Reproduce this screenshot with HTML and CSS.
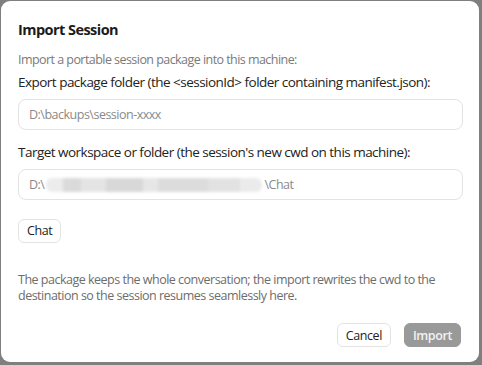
FILE: index.html
```html
<!DOCTYPE html>
<html>
<head>
<meta charset="utf-8">
<link rel="stylesheet" href="styles.css">
</head>
<body>
<div class="dialog">
  <h1 class="title">Import Session</h1>
  <p class="subtitle">Import a portable session package into this machine:</p>
  <label class="label">Export package folder (the &lt;sessionId&gt; folder containing manifest.json):</label>
  <div class="input"><span class="placeholder">D:\backups\session-xxxx</span></div>
  <label class="label">Target workspace or folder (the session's new cwd on this machine):</label>
  <div class="input"><span class="value">D:\</span><span class="redact"></span><span class="value">\Chat</span></div>
  <div class="chips"><button class="chip">Chat</button></div>
  <p class="note">The package keeps the whole conversation; the import rewrites the cwd to the destination so the session resumes seamlessly here.</p>
  <div class="actions">
    <button class="btn">Cancel</button>
    <button class="btn primary">Import</button>
  </div>
</div>
</body>
</html>
```
FILE: styles.css
```css
html, body {
  margin: 0;
  padding: 0;
  height: 100%;
  background: #7f7f7f;
}
body {
  padding: 1px 3px 3px 1px;
  box-sizing: border-box;
  font-family: "Open Sans", "Noto Sans", sans-serif;
}
.dialog {
  background: #fff;
  border-radius: 9px;
  height: 100%;
  box-sizing: border-box;
  padding: 19px 16px 0 17px;
  display: flex;
  flex-direction: column;
}
.title {
  margin: 0;
  font-size: 14.5px;
  font-weight: 700;
  color: #1b1b1b;
  line-height: 20px;
  letter-spacing: -0.55px;
}
.subtitle {
  margin: 12px 0 0 0;
  font-size: 12.5px;
  line-height: 16px;
  color: #7a7a7a;
  letter-spacing: -0.55px;
}
.label {
  display: block;
  margin-top: 5px;
  font-size: 13.5px;
  line-height: 18px;
  color: #222;
  letter-spacing: -0.52px;
}
.input {
  margin-top: 9px;
  height: 31px;
  border: 1px solid #e3e3e3;
  border-radius: 8px;
  box-sizing: border-box;
  display: flex;
  align-items: center;
  padding: 0 10px;
  font-size: 12.5px;
  letter-spacing: -0.5px;
}
.input + .label { margin-top: 13px; }
.label + .input { margin-top: 8px; }
.placeholder { color: #8a8a8a; }
.value { color: #8a8a8a; }
.redact {
  width: 216px;
  height: 14px;
  margin-left: 2px;
  margin-right: 2px;
  border-radius: 6px;
  background: linear-gradient(90deg, #ececec 0 8%, #dadada 8% 16%, #e4e4e4 16% 28%, #d8d8d8 28% 45%, #e6e6e6 45% 52%, #dcdcdc 52% 75%, #e2e2e2 75% 90%, #ebebeb 90%);
  filter: blur(1.5px);
}
.chips {
  margin-top: 19px;
  display: flex;
}
.chip {
  font-family: inherit;
  font-size: 12.5px;
  letter-spacing: -0.4px;
  color: #222;
  background: #fff;
  border: 1px solid #e3e3e3;
  border-radius: 6px;
  height: 24px;
  padding: 0 8px;
  line-height: 22px;
}
.note {
  margin: 29px 0 0 0;
  font-size: 12.5px;
  line-height: 16px;
  color: #6d6d6d;
  letter-spacing: -0.5px;
  padding-right: 10px;
}
.actions {
  margin-top: 19px;
  display: flex;
  justify-content: flex-end;
  gap: 13px;
  padding-right: 2px;
}
.btn {
  font-family: inherit;
  font-size: 12.5px;
  letter-spacing: -0.4px;
  height: 24px;
  padding: 0 8px;
  border-radius: 6px;
  border: 1px solid #e3e3e3;
  background: #fff;
  color: #222;
  min-width: 54px;
}
.btn.primary {
  background: #999;
  border-color: #999;
  color: #f2f2f2;
  font-weight: 600;
  min-width: 56px;
}
```
